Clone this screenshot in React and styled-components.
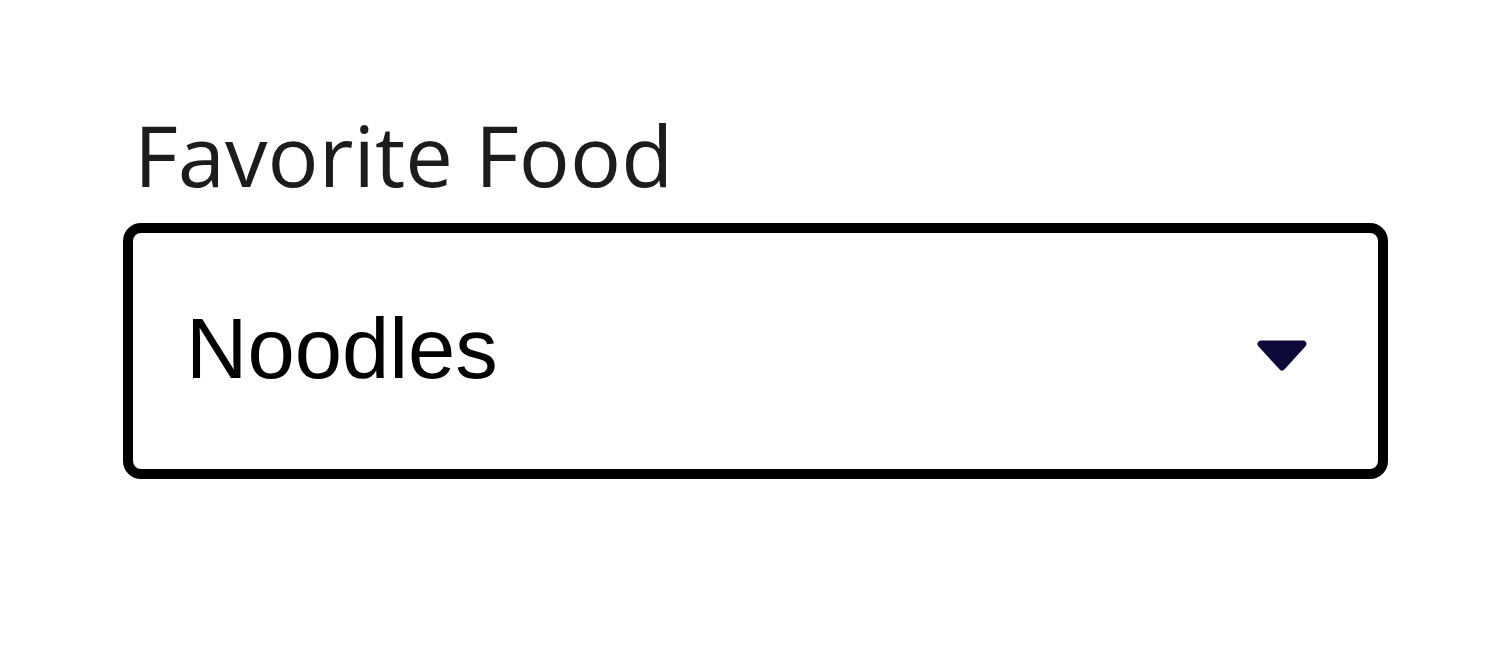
import React from "react";
import styled, { createGlobalStyle } from "styled-components";

const Global = createGlobalStyle`
  html, body { margin: 0; padding: 0; background: #ffffff; }
  body { width: 1488px; height: 671px; overflow: hidden; }
`;

const Page = styled.div`
  padding: 97px 0 0 123px;
  box-sizing: border-box;
  width: 1488px;
  height: 671px;
`;

const Field = styled.div`
  display: flex;
  flex-direction: column;
  width: 1265px;
`;

const Label = styled.label`
  font-family: "Open Sans", "Noto Sans", sans-serif;
  font-size: 85px;
  line-height: 1.362;
  color: #1c1c1c;
  padding-left: 11px;
  height: 126px;
`;

const SelectBox = styled.div`
  box-sizing: border-box;
  height: 256px;
  border: 10px solid #000000;
  border-radius: 18px;
  display: flex;
  align-items: center;
  justify-content: space-between;
  padding: 0 70px 0 53px;
`;

const Value = styled.span`
  font-family: "Liberation Sans", Arial, sans-serif;
  font-size: 85px;
  color: #000000;
  line-height: 1;
  margin-top: -6px;
`;

const Caret = styled.svg`
  width: 52px;
  height: 31px;
  display: block;
  margin-top: 9px;
`;

export default function App() {
  return (
    <>
      <Global />
      <Page>
        <Field>
          <Label>Favorite Food</Label>
          <SelectBox>
            <Value>Noodles</Value>
            <Caret viewBox="0 0 52 31">
              <path
                d="M5 4 L47 4 L26 27 Z"
                fill="#0d0a3a"
                stroke="#0d0a3a"
                strokeWidth="7"
                strokeLinejoin="round"
              />
            </Caret>
          </SelectBox>
        </Field>
      </Page>
    </>
  );
}
